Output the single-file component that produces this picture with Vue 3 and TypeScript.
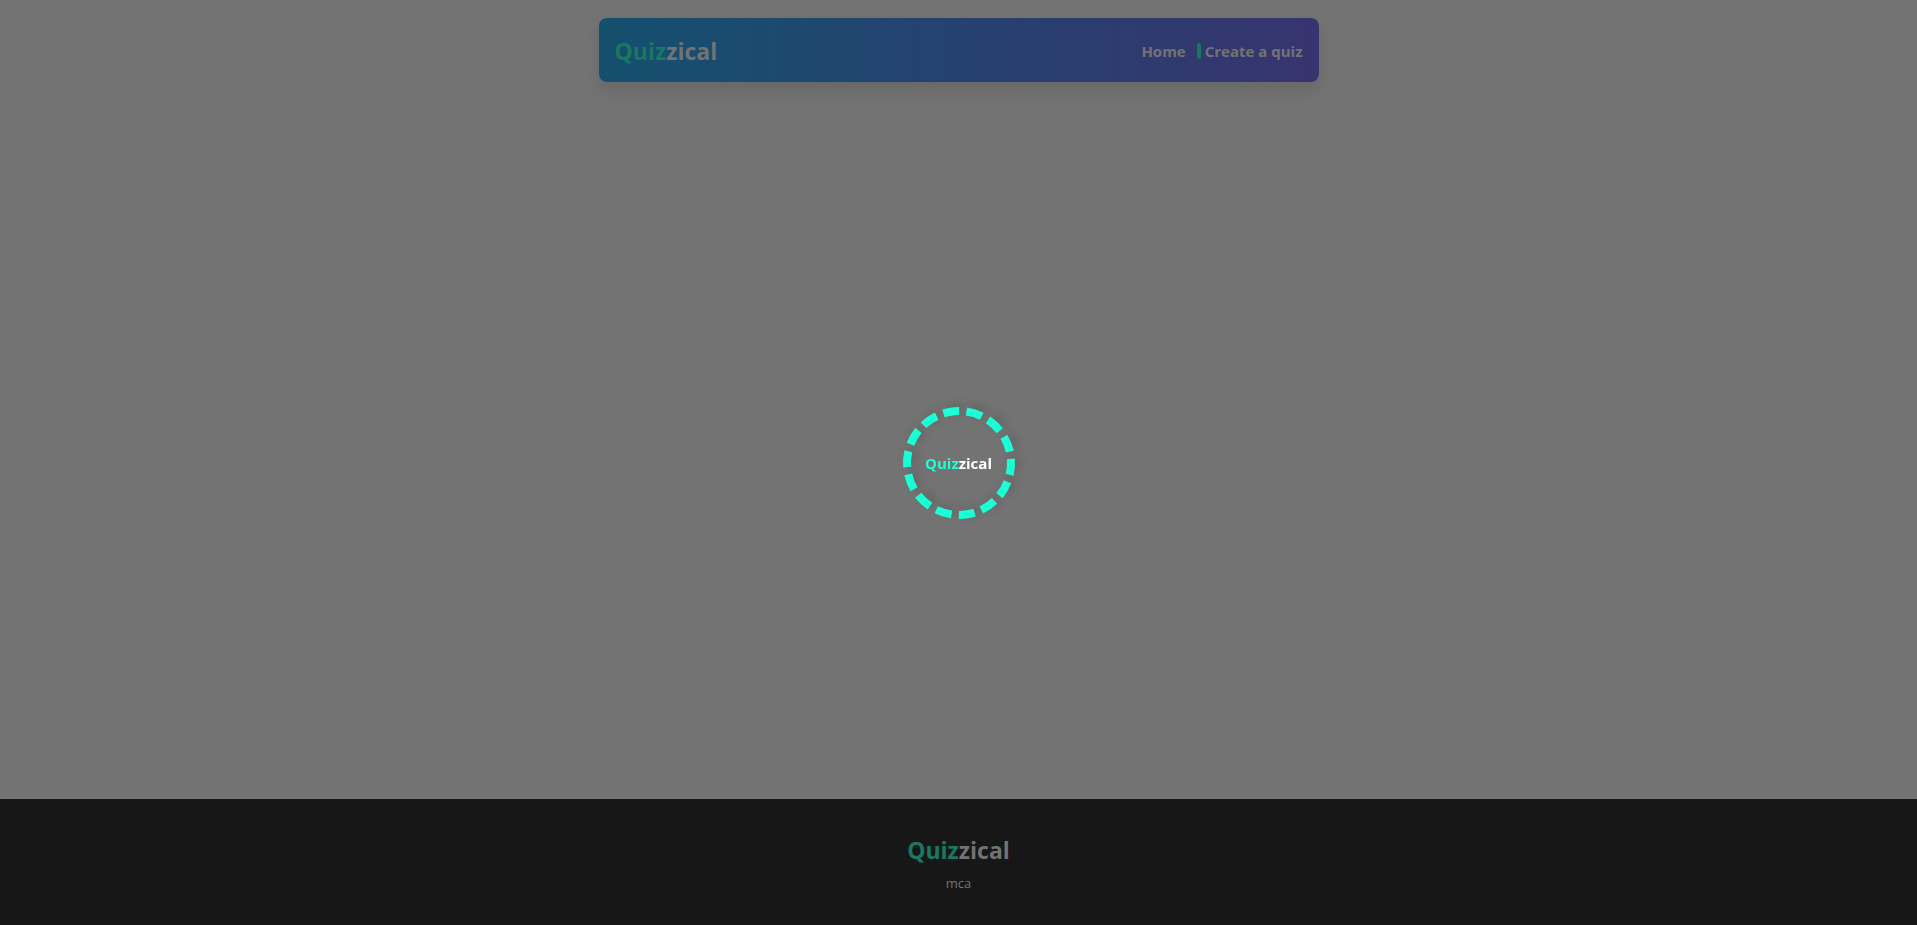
<script setup lang="ts">
interface NavLink {
  label: string
  href: string
}

const links: NavLink[] = [
  { label: 'Home', href: '#home' },
  { label: 'Create a quiz', href: '#create' },
]
</script>

<template>
  <div class="page">
    <header class="navbar">
      <a class="brand" href="#home"><span class="accent">Quiz</span>zical</a>
      <nav class="links" aria-label="Main">
        <a v-for="link in links" :key="link.label" class="link" :href="link.href">{{ link.label }}</a>
      </nav>
    </header>

    <main class="content"></main>

    <footer class="footer">
      <div class="brand"><span class="accent">Quiz</span>zical</div>
      <p class="credit">mca</p>
    </footer>

    <div class="overlay" role="status" aria-label="Loading">
      <div class="loader">
        <svg class="ring" viewBox="0 0 112 112" aria-hidden="true">
          <circle cx="56" cy="56" r="52" pathLength="140" transform="rotate(-4.6 56 56)" />
        </svg>
        <div class="loader-brand"><span>Quiz</span>zical</div>
      </div>
    </div>
  </div>
</template>

<style>
body {
  margin: 0;
  background: #737373;
}
</style>

<style scoped>
.page {
  display: flex;
  flex-direction: column;
  min-height: 100vh;
  font-family: "Segoe UI", "Open Sans", "Noto Sans", sans-serif;
  color: #737373;
}

.navbar {
  box-sizing: border-box;
  display: flex;
  align-items: center;
  justify-content: space-between;
  width: calc(100% - 32px);
  max-width: 720px;
  height: 64px;
  margin: 18px auto 0;
  padding: 2px 16px 0;
  border-radius: 8px;
  background: linear-gradient(to right, #14506e, #37346f);
  box-shadow: 0 8px 16px rgba(0, 0, 0, 0.1);
}

.brand {
  font-size: 23px;
  line-height: 32px;
  font-weight: 700;
  color: #737373;
  text-decoration: none;
}

.accent {
  color: #187862;
}

.links {
  display: flex;
  align-items: center;
}

.link {
  font-size: 15px;
  line-height: 24px;
  font-weight: 700;
  color: #737373;
  text-decoration: none;
}

.link + .link {
  display: flex;
  align-items: center;
  margin-left: 11px;
}

.link + .link::before {
  content: "";
  width: 4px;
  height: 16px;
  margin-right: 4px;
  border-radius: 2px;
  background: #187862;
}

.content {
  flex: 1;
}

.footer {
  box-sizing: border-box;
  display: flex;
  flex-direction: column;
  align-items: center;
  min-height: 126px;
  padding-top: 35px;
  background: #171717;
}

.credit {
  margin: 5px 0 0;
  font-size: 13px;
  line-height: 24px;
}

.overlay {
  position: fixed;
  inset: 0;
  display: grid;
  place-items: center;
}

.loader {
  display: grid;
  place-items: center;
}

.ring,
.loader-brand {
  grid-area: 1 / 1;
}

.ring {
  width: 112px;
  height: 112px;
  overflow: visible;
  filter: drop-shadow(4px -3px 5px rgba(0, 0, 0, 0.15));
}

.ring circle {
  fill: none;
  stroke: #1affd5;
  stroke-width: 8;
  stroke-dasharray: 6.9 3.1;
}

.loader-brand {
  font-size: 15px;
  line-height: 24px;
  font-weight: 700;
  color: #fff;
}

.loader-brand span {
  color: #1affd5;
}
</style>
